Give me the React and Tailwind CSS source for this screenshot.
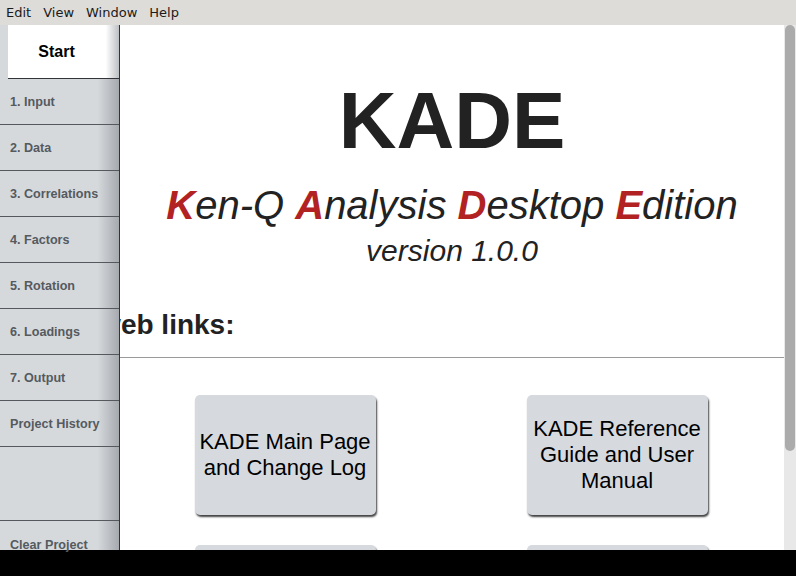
import React from "react";

const steps = [
  "1. Input",
  "2. Data",
  "3. Correlations",
  "4. Factors",
  "5. Rotation",
  "6. Loadings",
  "7. Output",
  "Project History",
];

const links = [
  ["KADE Main Page", "and Change Log"],
  ["KADE Reference", "Guide and User", "Manual"],
  ["KADE Source", "Code"],
  ["Ken-Q Analysis", "Web Edition"],
];

const Red = ({ children }) => (
  <span className="font-bold text-[#b22222]">{children}</span>
);

const App = () => {
  return (
    <div className="w-[796px] h-[576px] flex flex-col overflow-hidden bg-white font-['Liberation_Sans',Arial,sans-serif]">
      {/* menu bar */}
      <div className="h-[25px] shrink-0 flex items-center bg-[#dedcd8] text-[13px] text-[#1a1a1a] font-['DejaVu_Sans',sans-serif]">
        {["Edit", "View", "Window", "Help"].map((m) => (
          <span key={m} className="px-[6px]">
            {m}
          </span>
        ))}
      </div>

      <div className="flex-1 flex min-h-0">
        {/* side nav */}
        <div className="w-[120px] shrink-0 flex flex-col border-r border-[#33333a] bg-[linear-gradient(to_right,#d6d9dc_82%,#a6a9ae)] z-10">
          <div className="h-[54px] shrink-0 flex items-center justify-center ml-[8px] pr-[14px] border-b border-[#33333a] bg-[linear-gradient(to_right,#ffffff_88%,#bcbfc3)] text-[16px] font-bold text-black">
            Start
          </div>
          {steps.map((s) => (
            <div
              key={s}
              className="h-[46px] shrink-0 flex items-center pl-[10px] pt-[1px] border-b border-[#55585c] text-[12.6px] font-bold text-[#555a5f]"
            >
              {s}
            </div>
          ))}
          <div className="h-[74px] shrink-0 border-b border-[#55585c]" />
          <div className="pl-[10px] pt-[15px] text-[12.6px] font-bold text-[#555a5f]">
            Clear Project
          </div>
        </div>

        {/* main content */}
        <div className="flex-1 min-w-0 overflow-hidden text-[#222]">
          <div className="flex flex-col items-center pt-[50px]">
            <h1 className="text-[80px] font-bold leading-[92px]">KADE</h1>
            <p className="text-[40px] italic leading-[46px] mt-[15px]">
              <Red>K</Red>en-Q <Red>A</Red>nalysis <Red>D</Red>esktop{" "}
              <Red>E</Red>dition
            </p>
            <p className="text-[30px] italic leading-[34px] mt-[6px]">
              version 1.0.0
            </p>
          </div>
          <h2 className="-ml-[108px] mt-[41px] text-[28px] font-bold leading-[32px]">
            KADE web links:
          </h2>
          <div className="h-px bg-[#9a9a9a] mt-[16px]" />
          <div className="grid grid-cols-2 gap-y-[30px] pt-[37px]">
            {links.map((l, i) => (
              <div key={i} className="flex justify-center">
                <button className="w-[181px] h-[120px] flex flex-col items-center justify-center rounded-[5px] bg-[#d6dadf] text-[22px] leading-[26px] text-black shadow-[1px_2px_2px_rgba(0,0,0,0.75)] -translate-x-[1px]">
                  {l.map((t) => (
                    <span key={t} className="whitespace-nowrap">
                      {t}
                    </span>
                  ))}
                </button>
              </div>
            ))}
          </div>
        </div>

        {/* scrollbar */}
        <div className="w-[12px] shrink-0 bg-[#e8e8e8] px-[1px]">
          <div className="h-[426px] rounded-full bg-[#ababab]" />
        </div>
      </div>

      <div className="h-[26px] shrink-0 bg-black" />
    </div>
  );
};

export default App;
